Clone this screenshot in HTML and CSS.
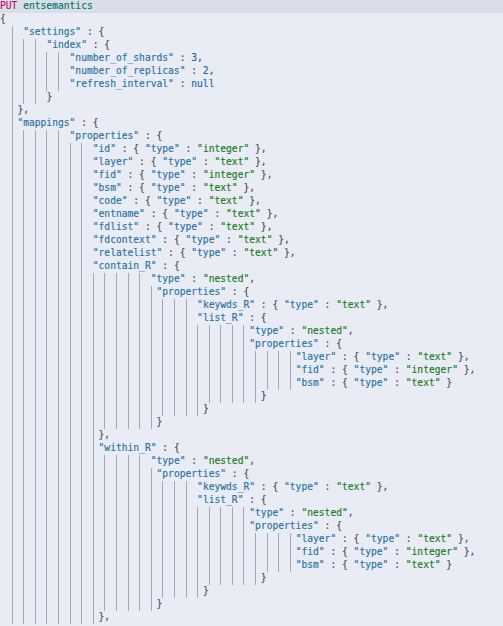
FILE: index.html
```html
<!DOCTYPE html>
<html>
<head>
<meta charset="utf-8">
<link rel="stylesheet" href="styles.css">
</head>
<body>
<div class="editor">
<div class="ln active"><span class="m">PUT</span> <span class="u">entsemantics</span></div>
<div class="ln"><span class="p">{</span></div>
<div class="ln">  <i class="g">  </i><span class="k">"settings"</span><span class="p"> : {</span></div>
<div class="ln">  <i class="g">  </i><i class="g">  </i><i class="g">  </i><span class="k">"index"</span><span class="p"> : {</span></div>
<div class="ln">  <i class="g">  </i><i class="g">  </i><i class="g">  </i><i class="g">  </i><i class="g">  </i><span class="k">"number_of_shards"</span><span class="p"> : </span><span class="n">3</span><span class="p">,</span></div>
<div class="ln">  <i class="g">  </i><i class="g">  </i><i class="g">  </i><i class="g">  </i><i class="g">  </i><span class="k">"number_of_replicas"</span><span class="p"> : </span><span class="n">2</span><span class="p">,</span></div>
<div class="ln">  <i class="g">  </i><i class="g">  </i><i class="g">  </i><i class="g">  </i><i class="g">  </i><span class="k">"refresh_interval"</span><span class="p"> : </span><span class="n">null</span></div>
<div class="ln">  <i class="g">  </i><i class="g">  </i><i class="g">  </i><span class="p">}</span></div>
<div class="ln">  <i class="g"> </i><span class="p">},</span></div>
<div class="ln">  <i class="g"> </i><span class="k">"mappings"</span><span class="p"> : {</span></div>
<div class="ln">  <i class="g">  </i><i class="g">  </i><i class="g">  </i><i class="g">  </i><i class="g">  </i><span class="k">"properties"</span><span class="p"> : {</span></div>
<div class="ln">  <i class="g">  </i><i class="g">  </i><i class="g">  </i><i class="g">  </i><i class="g">  </i><i class="g">  </i><i class="g">  </i><span class="k">"id"</span><span class="p"> : { </span><span class="k">"type"</span><span class="p"> : </span><span class="s">"integer"</span><span class="p"> },</span></div>
<div class="ln">  <i class="g">  </i><i class="g">  </i><i class="g">  </i><i class="g">  </i><i class="g">  </i><i class="g">  </i><i class="g">  </i><span class="k">"layer"</span><span class="p"> : { </span><span class="k">"type"</span><span class="p"> : </span><span class="s">"text"</span><span class="p"> },</span></div>
<div class="ln">  <i class="g">  </i><i class="g">  </i><i class="g">  </i><i class="g">  </i><i class="g">  </i><i class="g">  </i><i class="g">  </i><span class="k">"fid"</span><span class="p"> : { </span><span class="k">"type"</span><span class="p"> : </span><span class="s">"integer"</span><span class="p"> },</span></div>
<div class="ln">  <i class="g">  </i><i class="g">  </i><i class="g">  </i><i class="g">  </i><i class="g">  </i><i class="g">  </i><i class="g">  </i><span class="k">"bsm"</span><span class="p"> : { </span><span class="k">"type"</span><span class="p"> : </span><span class="s">"text"</span><span class="p"> },</span></div>
<div class="ln">  <i class="g">  </i><i class="g">  </i><i class="g">  </i><i class="g">  </i><i class="g">  </i><i class="g">  </i><i class="g">  </i><span class="k">"code"</span><span class="p"> : { </span><span class="k">"type"</span><span class="p"> : </span><span class="s">"text"</span><span class="p"> },</span></div>
<div class="ln">  <i class="g">  </i><i class="g">  </i><i class="g">  </i><i class="g">  </i><i class="g">  </i><i class="g">  </i><i class="g">  </i><span class="k">"entname"</span><span class="p"> : { </span><span class="k">"type"</span><span class="p"> : </span><span class="s">"text"</span><span class="p"> },</span></div>
<div class="ln">  <i class="g">  </i><i class="g">  </i><i class="g">  </i><i class="g">  </i><i class="g">  </i><i class="g">  </i><i class="g">  </i><span class="k">"fdlist"</span><span class="p"> : { </span><span class="k">"type"</span><span class="p"> : </span><span class="s">"text"</span><span class="p"> },</span></div>
<div class="ln">  <i class="g">  </i><i class="g">  </i><i class="g">  </i><i class="g">  </i><i class="g">  </i><i class="g">  </i><i class="g">  </i><span class="k">"fdcontext"</span><span class="p"> : { </span><span class="k">"type"</span><span class="p"> : </span><span class="s">"text"</span><span class="p"> },</span></div>
<div class="ln">  <i class="g">  </i><i class="g">  </i><i class="g">  </i><i class="g">  </i><i class="g">  </i><i class="g">  </i><i class="g">  </i><span class="k">"relatelist"</span><span class="p"> : { </span><span class="k">"type"</span><span class="p"> : </span><span class="s">"text"</span><span class="p"> },</span></div>
<div class="ln">  <i class="g">  </i><i class="g">  </i><i class="g">  </i><i class="g">  </i><i class="g">  </i><i class="g">  </i><i class="g">  </i><span class="k">"contain_R"</span><span class="p"> : {</span></div>
<div class="ln">  <i class="g">  </i><i class="g">  </i><i class="g">  </i><i class="g">  </i><i class="g">  </i><i class="g">  </i><i class="g">  </i><i class="g">  </i><i class="g">  </i><i class="g">  </i><i class="g">  </i><i class="g">  </i><span class="k">"type"</span><span class="p"> : </span><span class="s">"nested"</span><span class="p">,</span></div>
<div class="ln">  <i class="g">  </i><i class="g">  </i><i class="g">  </i><i class="g">  </i><i class="g">  </i><i class="g">  </i><i class="g">  </i><i class="g">  </i><i class="g">  </i><i class="g">  </i><i class="g">  </i><i class="g">  </i><i class="g"> </i><span class="k">"properties"</span><span class="p"> : {</span></div>
<div class="ln">  <i class="g">  </i><i class="g">  </i><i class="g">  </i><i class="g">  </i><i class="g">  </i><i class="g">  </i><i class="g">  </i><i class="g">  </i><i class="g">  </i><i class="g">  </i><i class="g">  </i><i class="g">  </i><i class="g">  </i><i class="g">  </i><i class="g">  </i><i class="g">  </i><span class="k">"keywds_R"</span><span class="p"> : { </span><span class="k">"type"</span><span class="p"> : </span><span class="s">"text"</span><span class="p"> },</span></div>
<div class="ln">  <i class="g">  </i><i class="g">  </i><i class="g">  </i><i class="g">  </i><i class="g">  </i><i class="g">  </i><i class="g">  </i><i class="g">  </i><i class="g">  </i><i class="g">  </i><i class="g">  </i><i class="g">  </i><i class="g">  </i><i class="g">  </i><i class="g">  </i><i class="g">  </i><span class="k">"list_R"</span><span class="p"> : {</span></div>
<div class="ln">  <i class="g">  </i><i class="g">  </i><i class="g">  </i><i class="g">  </i><i class="g">  </i><i class="g">  </i><i class="g">  </i><i class="g">  </i><i class="g">  </i><i class="g">  </i><i class="g">  </i><i class="g">  </i><i class="g">  </i><i class="g">  </i><i class="g">  </i><i class="g">  </i><i class="g">  </i><i class="g">  </i><i class="g">  </i><i class="g">  </i><i class="g"> </i><span class="k">"type"</span><span class="p"> : </span><span class="s">"nested"</span><span class="p">,</span></div>
<div class="ln">  <i class="g">  </i><i class="g">  </i><i class="g">  </i><i class="g">  </i><i class="g">  </i><i class="g">  </i><i class="g">  </i><i class="g">  </i><i class="g">  </i><i class="g">  </i><i class="g">  </i><i class="g">  </i><i class="g">  </i><i class="g">  </i><i class="g">  </i><i class="g">  </i><i class="g">  </i><i class="g">  </i><i class="g">  </i><i class="g">  </i><i class="g"> </i><span class="k">"properties"</span><span class="p"> : {</span></div>
<div class="ln">  <i class="g">  </i><i class="g">  </i><i class="g">  </i><i class="g">  </i><i class="g">  </i><i class="g">  </i><i class="g">  </i><i class="g">  </i><i class="g">  </i><i class="g">  </i><i class="g">  </i><i class="g">  </i><i class="g">  </i><i class="g">  </i><i class="g">  </i><i class="g">  </i><i class="g">  </i><i class="g">  </i><i class="g">  </i><i class="g">  </i><i class="g">  </i><i class="g">  </i><i class="g">  </i><i class="g">  </i><i class="g"> </i><span class="k">"layer"</span><span class="p"> : { </span><span class="k">"type"</span><span class="p"> : </span><span class="s">"text"</span><span class="p"> },</span></div>
<div class="ln">  <i class="g">  </i><i class="g">  </i><i class="g">  </i><i class="g">  </i><i class="g">  </i><i class="g">  </i><i class="g">  </i><i class="g">  </i><i class="g">  </i><i class="g">  </i><i class="g">  </i><i class="g">  </i><i class="g">  </i><i class="g">  </i><i class="g">  </i><i class="g">  </i><i class="g">  </i><i class="g">  </i><i class="g">  </i><i class="g">  </i><i class="g">  </i><i class="g">  </i><i class="g">  </i><i class="g">  </i><i class="g"> </i><span class="k">"fid"</span><span class="p"> : { </span><span class="k">"type"</span><span class="p"> : </span><span class="s">"integer"</span><span class="p"> },</span></div>
<div class="ln">  <i class="g">  </i><i class="g">  </i><i class="g">  </i><i class="g">  </i><i class="g">  </i><i class="g">  </i><i class="g">  </i><i class="g">  </i><i class="g">  </i><i class="g">  </i><i class="g">  </i><i class="g">  </i><i class="g">  </i><i class="g">  </i><i class="g">  </i><i class="g">  </i><i class="g">  </i><i class="g">  </i><i class="g">  </i><i class="g">  </i><i class="g">  </i><i class="g">  </i><i class="g">  </i><i class="g">  </i><i class="g"> </i><span class="k">"bsm"</span><span class="p"> : { </span><span class="k">"type"</span><span class="p"> : </span><span class="s">"text"</span><span class="p"> }</span></div>
<div class="ln">  <i class="g">  </i><i class="g">  </i><i class="g">  </i><i class="g">  </i><i class="g">  </i><i class="g">  </i><i class="g">  </i><i class="g">  </i><i class="g">  </i><i class="g">  </i><i class="g">  </i><i class="g">  </i><i class="g">  </i><i class="g">  </i><i class="g">  </i><i class="g">  </i><i class="g">  </i><i class="g">  </i><i class="g">  </i><i class="g">  </i><i class="g">  </i><i class="g"> </i><span class="p">}</span></div>
<div class="ln">  <i class="g">  </i><i class="g">  </i><i class="g">  </i><i class="g">  </i><i class="g">  </i><i class="g">  </i><i class="g">  </i><i class="g">  </i><i class="g">  </i><i class="g">  </i><i class="g">  </i><i class="g">  </i><i class="g">  </i><i class="g">  </i><i class="g">  </i><i class="g">  </i><i class="g"> </i><span class="p">}</span></div>
<div class="ln">  <i class="g">  </i><i class="g">  </i><i class="g">  </i><i class="g">  </i><i class="g">  </i><i class="g">  </i><i class="g">  </i><i class="g">  </i><i class="g">  </i><i class="g">  </i><i class="g">  </i><i class="g">  </i><i class="g"> </i><span class="p">}</span></div>
<div class="ln">  <i class="g">  </i><i class="g">  </i><i class="g">  </i><i class="g">  </i><i class="g">  </i><i class="g">  </i><i class="g">  </i><i class="g"> </i><span class="p">},</span></div>
<div class="ln">  <i class="g">  </i><i class="g">  </i><i class="g">  </i><i class="g">  </i><i class="g">  </i><i class="g">  </i><i class="g">  </i><i class="g"> </i><span class="k">"within_R"</span><span class="p"> : {</span></div>
<div class="ln">  <i class="g">  </i><i class="g">  </i><i class="g">  </i><i class="g">  </i><i class="g">  </i><i class="g">  </i><i class="g">  </i><i class="g">  </i><i class="g">  </i><i class="g">  </i><i class="g">  </i><i class="g">  </i><span class="k">"type"</span><span class="p"> : </span><span class="s">"nested"</span><span class="p">,</span></div>
<div class="ln">  <i class="g">  </i><i class="g">  </i><i class="g">  </i><i class="g">  </i><i class="g">  </i><i class="g">  </i><i class="g">  </i><i class="g">  </i><i class="g">  </i><i class="g">  </i><i class="g">  </i><i class="g">  </i><i class="g"> </i><span class="k">"properties"</span><span class="p"> : {</span></div>
<div class="ln">  <i class="g">  </i><i class="g">  </i><i class="g">  </i><i class="g">  </i><i class="g">  </i><i class="g">  </i><i class="g">  </i><i class="g">  </i><i class="g">  </i><i class="g">  </i><i class="g">  </i><i class="g">  </i><i class="g">  </i><i class="g">  </i><i class="g">  </i><i class="g">  </i><span class="k">"keywds_R"</span><span class="p"> : { </span><span class="k">"type"</span><span class="p"> : </span><span class="s">"text"</span><span class="p"> },</span></div>
<div class="ln">  <i class="g">  </i><i class="g">  </i><i class="g">  </i><i class="g">  </i><i class="g">  </i><i class="g">  </i><i class="g">  </i><i class="g">  </i><i class="g">  </i><i class="g">  </i><i class="g">  </i><i class="g">  </i><i class="g">  </i><i class="g">  </i><i class="g">  </i><i class="g">  </i><span class="k">"list_R"</span><span class="p"> : {</span></div>
<div class="ln">  <i class="g">  </i><i class="g">  </i><i class="g">  </i><i class="g">  </i><i class="g">  </i><i class="g">  </i><i class="g">  </i><i class="g">  </i><i class="g">  </i><i class="g">  </i><i class="g">  </i><i class="g">  </i><i class="g">  </i><i class="g">  </i><i class="g">  </i><i class="g">  </i><i class="g">  </i><i class="g">  </i><i class="g">  </i><i class="g">  </i><i class="g"> </i><span class="k">"type"</span><span class="p"> : </span><span class="s">"nested"</span><span class="p">,</span></div>
<div class="ln">  <i class="g">  </i><i class="g">  </i><i class="g">  </i><i class="g">  </i><i class="g">  </i><i class="g">  </i><i class="g">  </i><i class="g">  </i><i class="g">  </i><i class="g">  </i><i class="g">  </i><i class="g">  </i><i class="g">  </i><i class="g">  </i><i class="g">  </i><i class="g">  </i><i class="g">  </i><i class="g">  </i><i class="g">  </i><i class="g">  </i><i class="g"> </i><span class="k">"properties"</span><span class="p"> : {</span></div>
<div class="ln">  <i class="g">  </i><i class="g">  </i><i class="g">  </i><i class="g">  </i><i class="g">  </i><i class="g">  </i><i class="g">  </i><i class="g">  </i><i class="g">  </i><i class="g">  </i><i class="g">  </i><i class="g">  </i><i class="g">  </i><i class="g">  </i><i class="g">  </i><i class="g">  </i><i class="g">  </i><i class="g">  </i><i class="g">  </i><i class="g">  </i><i class="g">  </i><i class="g">  </i><i class="g">  </i><i class="g">  </i><i class="g"> </i><span class="k">"layer"</span><span class="p"> : { </span><span class="k">"type"</span><span class="p"> : </span><span class="s">"text"</span><span class="p"> },</span></div>
<div class="ln">  <i class="g">  </i><i class="g">  </i><i class="g">  </i><i class="g">  </i><i class="g">  </i><i class="g">  </i><i class="g">  </i><i class="g">  </i><i class="g">  </i><i class="g">  </i><i class="g">  </i><i class="g">  </i><i class="g">  </i><i class="g">  </i><i class="g">  </i><i class="g">  </i><i class="g">  </i><i class="g">  </i><i class="g">  </i><i class="g">  </i><i class="g">  </i><i class="g">  </i><i class="g">  </i><i class="g">  </i><i class="g"> </i><span class="k">"fid"</span><span class="p"> : { </span><span class="k">"type"</span><span class="p"> : </span><span class="s">"integer"</span><span class="p"> },</span></div>
<div class="ln">  <i class="g">  </i><i class="g">  </i><i class="g">  </i><i class="g">  </i><i class="g">  </i><i class="g">  </i><i class="g">  </i><i class="g">  </i><i class="g">  </i><i class="g">  </i><i class="g">  </i><i class="g">  </i><i class="g">  </i><i class="g">  </i><i class="g">  </i><i class="g">  </i><i class="g">  </i><i class="g">  </i><i class="g">  </i><i class="g">  </i><i class="g">  </i><i class="g">  </i><i class="g">  </i><i class="g">  </i><i class="g"> </i><span class="k">"bsm"</span><span class="p"> : { </span><span class="k">"type"</span><span class="p"> : </span><span class="s">"text"</span><span class="p"> }</span></div>
<div class="ln">  <i class="g">  </i><i class="g">  </i><i class="g">  </i><i class="g">  </i><i class="g">  </i><i class="g">  </i><i class="g">  </i><i class="g">  </i><i class="g">  </i><i class="g">  </i><i class="g">  </i><i class="g">  </i><i class="g">  </i><i class="g">  </i><i class="g">  </i><i class="g">  </i><i class="g">  </i><i class="g">  </i><i class="g">  </i><i class="g">  </i><i class="g">  </i><i class="g"> </i><span class="p">}</span></div>
<div class="ln">  <i class="g">  </i><i class="g">  </i><i class="g">  </i><i class="g">  </i><i class="g">  </i><i class="g">  </i><i class="g">  </i><i class="g">  </i><i class="g">  </i><i class="g">  </i><i class="g">  </i><i class="g">  </i><i class="g">  </i><i class="g">  </i><i class="g">  </i><i class="g">  </i><i class="g"> </i><span class="p">}</span></div>
<div class="ln">  <i class="g">  </i><i class="g">  </i><i class="g">  </i><i class="g">  </i><i class="g">  </i><i class="g">  </i><i class="g">  </i><i class="g">  </i><i class="g">  </i><i class="g">  </i><i class="g">  </i><i class="g">  </i><i class="g"> </i><span class="p">}</span></div>
<div class="ln">  <i class="g">  </i><i class="g">  </i><i class="g">  </i><i class="g">  </i><i class="g">  </i><i class="g">  </i><i class="g">  </i><i class="g"> </i><span class="p">},</span></div>
</div>
</body>
</html>
```

FILE: styles.css
```css
html, body {
  margin: 0;
  padding: 0;
  background: #e9ecf4;
}

.editor {
  font-family: "DejaVu Sans Mono", "Liberation Mono", monospace;
  font-size: 9.63px;
  line-height: 12px;
  color: #4b5059;
  -webkit-text-stroke: 0.15px currentColor;
}

.ln {
  height: 13px;
  white-space: pre;
}

.ln.active {
  background: #d9dee9;
}

.g {
  display: inline-block;
  height: 13px;
  vertical-align: top;
  font-style: normal;
  box-shadow: inset 1px 0 0 #a2a8b9;
}

.m { color: #c80a68; }
.u { color: #00756c; }
.k { color: #2a72a3; }
.s { color: #187a1d; }
.n { color: #2463aa; }
.p { color: #4b5059; }
```
